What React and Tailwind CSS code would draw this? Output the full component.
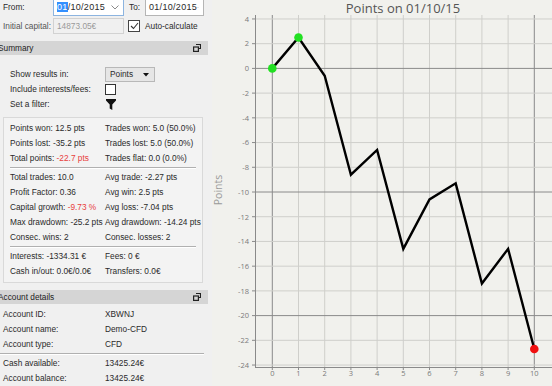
import React from 'react';

const series = [0, 2.5, -0.6, -8.6, -6.6, -14.6, -10.6, -9.3, -17.4, -14.6, -22.7];

const xPos = (i) => 60.3 + i * 26.2;
const yPos = (v) => 68.4 - v * 12.36;

function RestoreIcon() {
  return (
    <svg width="8" height="8" viewBox="0 0 8 8">
      <path d="M3 0.5 H7.5 V4.5 H6" fill="none" stroke="#222" strokeWidth="1.2" />
      <rect x="0.6" y="3" width="4.8" height="4.4" fill="none" stroke="#222" strokeWidth="1.2" />
    </svg>
  );
}

function Chevron() {
  return (
    <svg width="8" height="5" viewBox="0 0 8 5">
      <path d="M0.5 0.5 L4 4 L7.5 0.5" fill="none" stroke="#8a8a8a" strokeWidth="1" />
    </svg>
  );
}

function SectionHeader({ title }) {
  return (
    <div className="flex h-[14px] w-[208px] items-center justify-between bg-[#d5d5d5] pr-[7px]">
      <span className="-ml-[2px] text-[#222]">{title}</span>
      <RestoreIcon />
    </div>
  );
}

function Separator() {
  return <div className="mx-[6px] my-[1px] h-[2px] border-t border-b border-t-[#b0b0b0] border-b-white" />;
}

function StatRow({ left, leftVal, leftRed, right }) {
  return (
    <div className="flex h-[15px] items-center pl-[6px]">
      <span className="w-[95px] whitespace-nowrap">
        {left}
        {leftVal && <span className={leftRed ? 'text-[#e8403c]' : ''}>{leftVal}</span>}
      </span>
      <span className="whitespace-nowrap">{right}</span>
    </div>
  );
}

function AccountRow({ label, value }) {
  return (
    <div className="flex h-[15px] items-center pl-[3px]">
      <span className="w-[102px]">{label}</span>
      <span>{value}</span>
    </div>
  );
}

function LeftPanel() {
  return (
    <div className="flex h-full w-[212px] shrink-0 flex-col bg-[#f0f0f0] text-[8.3px] text-[#2a2a2a]" style={{ fontFamily: '"Liberation Sans", Arial, sans-serif' }}>
      <div className="-mt-[1px] flex h-[17px] items-center">
        <span className="w-[53px] pl-[3px]">From:</span>
        <div className="flex h-[17px] w-[71px] items-center justify-between border border-[#8cb4e0] bg-white pl-[3px] pr-[4px]">
          <span className="text-[9px] tracking-[0.3px]"><span className="bg-[#3390ff] text-white">01</span>/10/2015</span>
          <Chevron />
        </div>
        <span className="w-[21px] pl-[5px]">To:</span>
        <div className="flex h-[17px] w-[59px] items-center justify-between border border-[#b5b5b5] bg-white pl-[3px] pr-[4px]">
          <span className="text-[9px] tracking-[0.3px]">01/10/2015</span>
          <Chevron />
        </div>
      </div>
      <div className="mt-[2px] flex h-[16px] items-center">
        <span className="w-[53px] pl-[3px] text-[#555]">Initial capital:</span>
        <div className="flex h-[16px] w-[71px] items-center border border-[#d2d2d2] bg-[#f0f0f0] pl-[3px] text-[#9a9a9a]">14873.05€</div>
        <div className="ml-[4px] flex h-[12px] w-[12px] items-center justify-center border border-[#444] bg-white">
          <svg width="9" height="8" viewBox="0 0 9 8">
            <path d="M1 4 L3.5 6.5 L8 1" fill="none" stroke="#333" strokeWidth="1.1" />
          </svg>
        </div>
        <span className="pl-[5px]">Auto-calculate</span>
      </div>
      <div className="mt-[7px]">
        <SectionHeader title="Summary" />
      </div>
      <div className="mt-[12px] flex h-[16px] items-center pl-[10px]">
        <span className="w-[95px]">Show results in:</span>
        <div className="flex h-[15px] w-[50px] items-center justify-between border border-[#b8b8b8] bg-[#e6e6e6] pl-[4px] pr-[5px]">
          <span>Points</span>
          <svg width="6" height="4" viewBox="0 0 6 4"><path d="M0 0 H6 L3 3.5 Z" fill="#111" /></svg>
        </div>
      </div>
      <div className="flex h-[16px] items-center pl-[10px]">
        <span className="w-[95px]">Include interests/fees:</span>
        <div className="h-[11px] w-[11px] border border-[#333] bg-white" />
      </div>
      <div className="flex h-[16px] items-center pl-[10px]">
        <span className="w-[96px]">Set a filter:</span>
        <svg width="10" height="11" viewBox="0 0 10 11">
          <path d="M0 0 H10 V1.5 L6.3 5.5 V11 L3.7 9.5 V5.5 L0 1.5 Z" fill="#111" />
        </svg>
      </div>
      <div className="ml-[3px] mt-[5px] w-[200px] border border-[#d9d9d9] bg-[#f3f3f3] pb-[3px] pt-[3px]">
        <StatRow left="Points won: 12.5 pts" right="Trades won: 5.0 (50.0%)" />
        <StatRow left="Points lost: -35.2 pts" right="Trades lost: 5.0 (50.0%)" />
        <StatRow left="Total points: " leftVal="-22.7 pts" leftRed right="Trades flat: 0.0 (0.0%)" />
        <Separator />
        <StatRow left="Total trades: 10.0" right="Avg trade: -2.27 pts" />
        <StatRow left="Profit Factor: 0.36" right="Avg win: 2.5 pts" />
        <StatRow left="Capital growth: " leftVal="-9.73 %" leftRed right="Avg loss: -7.04 pts" />
        <StatRow left="Max drawdown: -25.2 pts" right="Avg drawdown: -14.24 pts" />
        <StatRow left="Consec. wins: 2" right="Consec. losses: 2" />
        <Separator />
        <StatRow left="Interests: -1334.31 €" right="Fees: 0 €" />
        <StatRow left="Cash in/out: 0.0€/0.0€" right="Transfers: 0.0€" />
      </div>
      <div className="mt-[7px]">
        <SectionHeader title="Account details" />
      </div>
      <div className="mt-[3px]">
        <AccountRow label="Account ID:" value="XBWNJ" />
        <AccountRow label="Account name:" value="Demo-CFD" />
        <AccountRow label="Account type:" value="CFD" />
        <div className="my-[1px] mr-[8px] h-[2px] border-t border-b border-t-[#b0b0b0] border-b-white" />
        <AccountRow label="Cash available:" value="13425.24€" />
        <AccountRow label="Account balance:" value="13425.24€" />
      </div>
    </div>
  );
}

function Chart() {
  const yTicks = [];
  for (let v = 4; v >= -24; v -= 2) yTicks.push(v);
  const xTicks = [0, 1, 2, 3, 4, 5, 6, 7, 8, 9, 10];
  const points = series.map((v, i) => `${xPos(i)},${yPos(v)}`).join(' ');

  return (
    <div className="h-full flex-1 bg-[#f1f1ed]">
      <svg width="340" height="386" viewBox="0 0 340 386" style={{ fontFamily: '"Open Sans", "Noto Sans", sans-serif' }}>
        <text x="191" y="13" textAnchor="middle" fontSize="13" fill="#555">Points on 01/10/15</text>
        <text x="0" y="0" transform="translate(10 190) rotate(-90)" textAnchor="middle" fontSize="10.5" fill="#9a9a9a">Points</text>

        {xTicks.map((i) => (
          <line key={'vx' + i} x1={xPos(i)} x2={xPos(i)} y1="15" y2="367" stroke={i === 0 || i === 10 ? '#8a8a8a' : '#cfcfcb'} strokeWidth="1" />
        ))}
        {yTicks.map((v) => (
          <line key={'hy' + v} x1="43" x2="340" y1={yPos(v)} y2={yPos(v)} stroke={v % 10 === 0 ? '#8a8a8a' : '#cfcfcb'} strokeWidth="1" />
        ))}
        <line x1="43.5" x2="43.5" y1="15" y2="367" stroke="#8a8a8a" strokeWidth="1" />
        <line x1="43" x2="340" y1="367.5" y2="367.5" stroke="#8a8a8a" strokeWidth="1" />

        {yTicks.map((v) => (
          <g key={'yl' + v}>
            <line x1="40" x2="43" y1={yPos(v)} y2={yPos(v)} stroke="#8a8a8a" />
            <text x="37" y={yPos(v) + 2.8} textAnchor="end" fontSize="7.5" fill="#7a7a7a">{v}</text>
          </g>
        ))}
        {xTicks.map((i) => (
          <g key={'xl' + i}>
            <line x1={xPos(i)} x2={xPos(i)} y1="367" y2="370" stroke="#8a8a8a" />
            <text x={xPos(i)} y="376" textAnchor="middle" fontSize="7.5" fill="#7a7a7a">{i}</text>
          </g>
        ))}

        <polyline points={points} fill="none" stroke="#000" strokeWidth="2.4" strokeLinejoin="miter" />
        <circle cx={xPos(0)} cy={yPos(0)} r="4.3" fill="#22e022" />
        <circle cx={xPos(1)} cy={yPos(2.5)} r="4.3" fill="#22e022" />
        <circle cx={xPos(10)} cy={yPos(-22.7)} r="4.3" fill="#f01010" />
      </svg>
    </div>
  );
}

export default function App() {
  return (
    <div className="flex h-[386px] w-[552px] overflow-hidden">
      <LeftPanel />
      <Chart />
    </div>
  );
}
